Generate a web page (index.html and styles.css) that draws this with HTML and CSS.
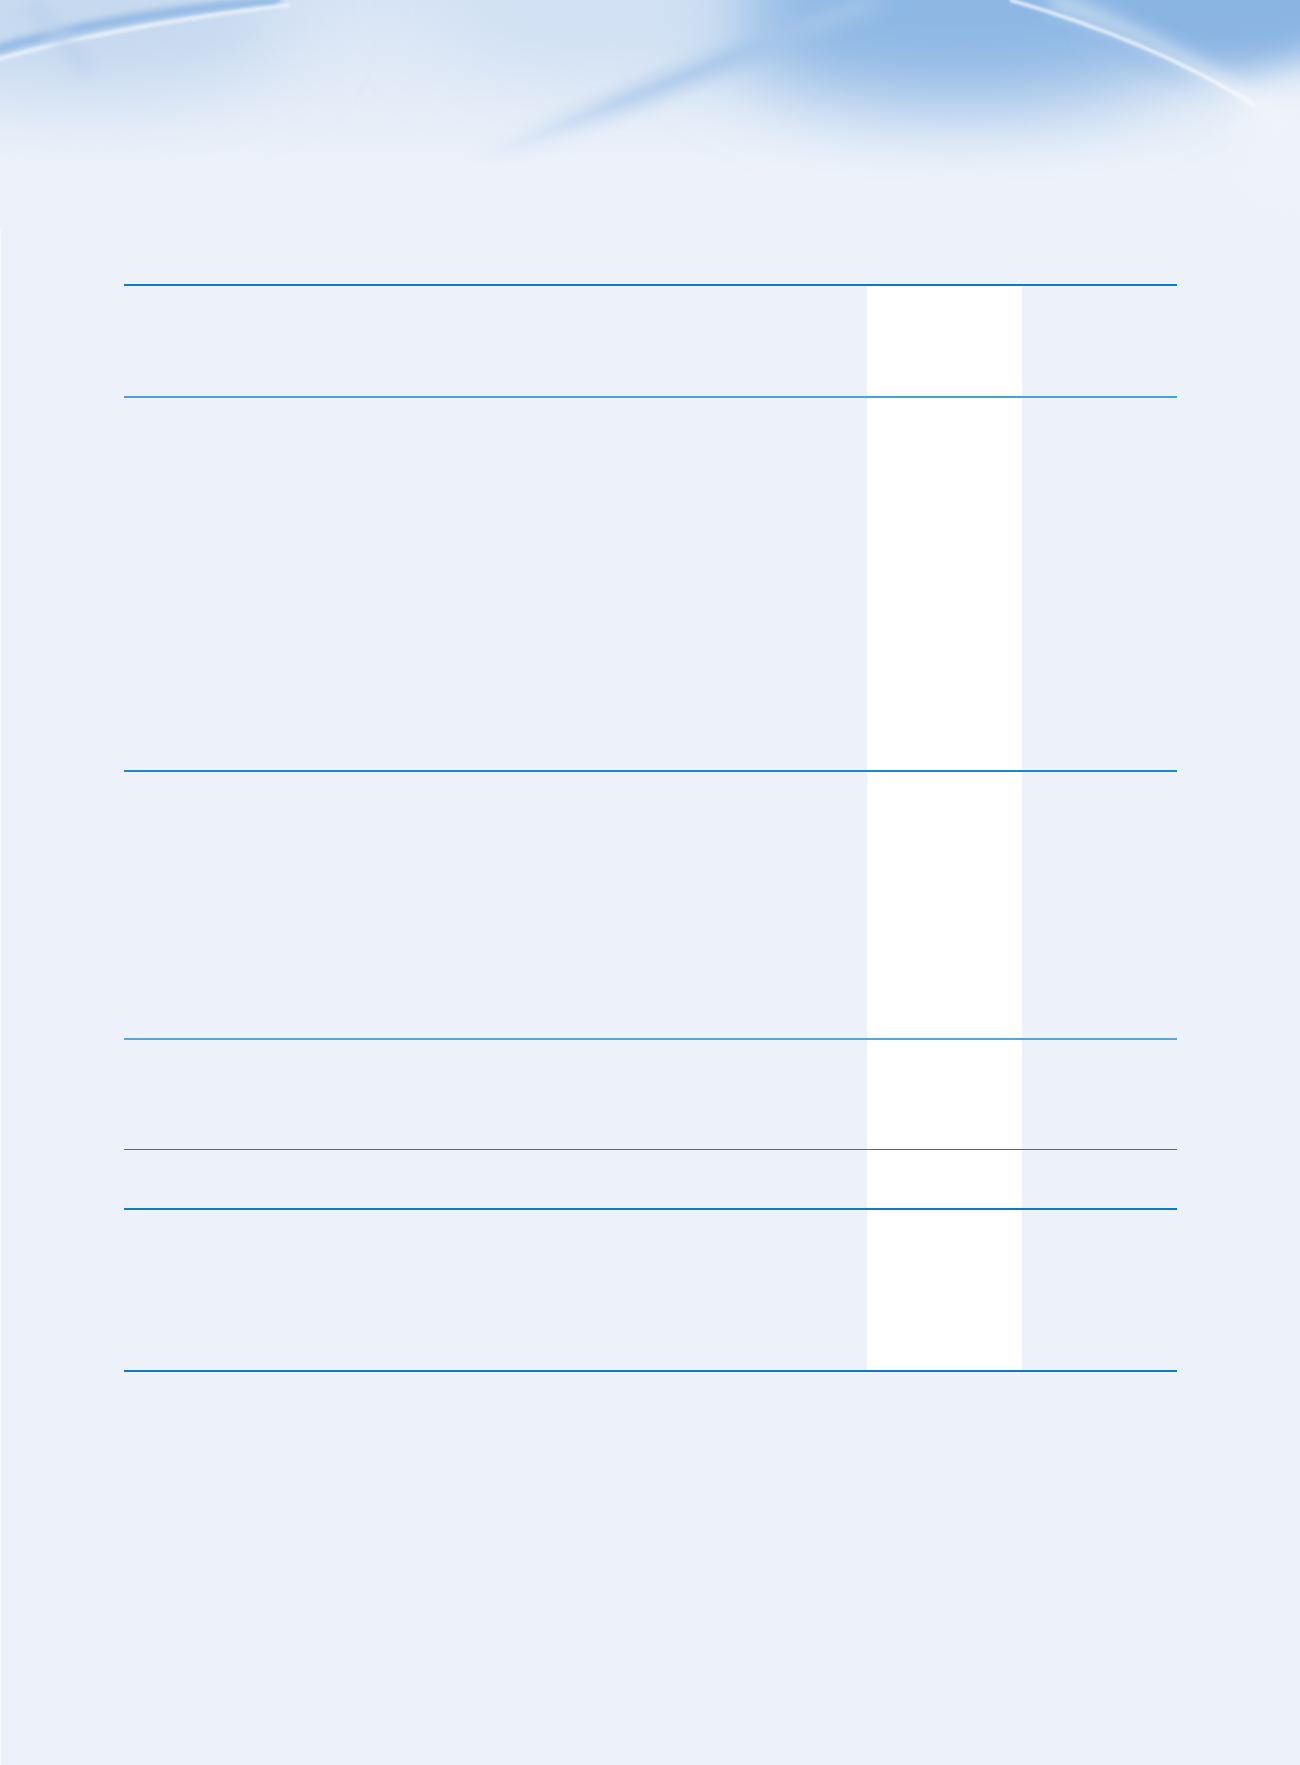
FILE: index.html
```html
<!DOCTYPE html>
<html lang="en">
<head>
<meta charset="utf-8">
<title>Table</title>
<link rel="stylesheet" href="styles.css">
</head>
<body>
<header class="banner">
  <svg class="banner-art" width="1300" height="230" viewBox="0 0 1300 230" xmlns="http://www.w3.org/2000/svg" aria-hidden="true">
    <defs>
      <linearGradient id="bg" x1="0" y1="0" x2="0" y2="1">
        <stop offset="0" stop-color="#d7e4f4"/>
        <stop offset="0.75" stop-color="#edf2fa"/>
        <stop offset="1" stop-color="#edf2fa"/>
      </linearGradient>
      <linearGradient id="streak" gradientUnits="userSpaceOnUse" x1="880" y1="0" x2="460" y2="165">
        <stop offset="0" stop-color="#9cc0e8" stop-opacity="1"/>
        <stop offset="0.6" stop-color="#b2cdec" stop-opacity="0.8"/>
        <stop offset="1" stop-color="#d8e5f5" stop-opacity="0"/>
      </linearGradient>
      <filter id="b40" x="-50%" y="-50%" width="200%" height="200%"><feGaussianBlur stdDeviation="40"/></filter>
      <filter id="b20" x="-50%" y="-50%" width="200%" height="200%"><feGaussianBlur stdDeviation="18"/></filter>
      <filter id="b8" x="-50%" y="-50%" width="200%" height="200%"><feGaussianBlur stdDeviation="8"/></filter>
      <filter id="b4" x="-50%" y="-50%" width="200%" height="200%"><feGaussianBlur stdDeviation="3.5"/></filter>
      <filter id="b2" x="-50%" y="-50%" width="200%" height="200%"><feGaussianBlur stdDeviation="1.5"/></filter>
    </defs>
    <rect width="1300" height="230" fill="url(#bg)"/>
    <ellipse cx="960" cy="10" rx="260" ry="95" fill="#8db7e4" filter="url(#b40)"/>
    <ellipse cx="1230" cy="0" rx="130" ry="70" fill="#8ab4e2" filter="url(#b20)"/>
    <ellipse cx="1290" cy="150" rx="60" ry="60" fill="#eef3fa" filter="url(#b20)"/>
    <ellipse cx="90" cy="20" rx="200" ry="70" fill="#c5d8ef" filter="url(#b40)"/>
    <ellipse cx="600" cy="10" rx="160" ry="60" fill="#d0e0f3" filter="url(#b40)"/>
    <path d="M 880 0 L 460 165" stroke="url(#streak)" stroke-width="22" fill="none" filter="url(#b8)"/>
    <path d="M 860 5 L 500 150" stroke="url(#streak)" stroke-width="5" fill="none" filter="url(#b4)"/>
    <path d="M 1010 0 Q 1150 40 1255 105" stroke="#ffffff" stroke-width="3" fill="none" opacity="0.9" filter="url(#b2)"/>
    <path d="M 1050 0 Q 1170 40 1280 120" stroke="#f3f7fc" stroke-width="14" fill="none" opacity="0.55" filter="url(#b8)"/>
    <path d="M -5 50 Q 110 15 280 0" stroke="#8db6e3" stroke-width="9" fill="none" filter="url(#b4)"/>
    <path d="M -5 60 Q 120 25 290 5" stroke="#f2f6fc" stroke-width="4" fill="none" opacity="0.8" filter="url(#b2)"/>
    <path d="M 30 0 Q 60 40 90 70" stroke="#b9d0ec" stroke-width="20" fill="none" opacity="0.6" filter="url(#b8)"/>
  </svg>
</header>
<main class="page">
  <div class="sheet">
    <div class="row row-1">
      <div class="cell c-a"></div><div class="cell c-b"></div><div class="cell c-hl"></div><div class="cell c-d"></div>
    </div>
    <div class="row row-2">
      <div class="cell c-a"></div><div class="cell c-b"></div><div class="cell c-hl"></div><div class="cell c-d"></div>
    </div>
    <div class="row row-3">
      <div class="cell c-a"></div><div class="cell c-b"></div><div class="cell c-hl"></div><div class="cell c-d"></div>
    </div>
    <div class="row row-4">
      <div class="cell c-a"></div><div class="cell c-b"></div><div class="cell c-hl"></div><div class="cell c-d"></div>
    </div>
    <div class="row row-5">
      <div class="cell c-a"></div><div class="cell c-b"></div><div class="cell c-hl"></div><div class="cell c-d"></div>
    </div>
    <div class="row row-6">
      <div class="cell c-a"></div><div class="cell c-b"></div><div class="cell c-hl"></div><div class="cell c-d"></div>
    </div>
  </div>
</main>
</body>
</html>
```
FILE: styles.css
```css
html, body {
  margin: 0;
  padding: 0;
}
body {
  background: #edf2fa;
  font-family: "Liberation Sans", Arial, sans-serif;
  width: 1300px;
  min-height: 1765px;
  overflow: hidden;
}
.banner {
  height: 230px;
}
.banner-art {
  display: block;
}
.page {
  border-left: 1px solid #f7f9fd;
  padding: 54px 0 0 123px;
  min-height: 1535px;
  box-sizing: border-box;
}
.sheet {
  width: 1053px;
  display: flex;
  flex-direction: column;
  border-bottom: 2px solid #0a7cc8;
}
.row {
  display: grid;
  grid-template-columns: 650px 93px 155px 155px;
  box-sizing: border-box;
}
.cell {
  height: 100%;
}
.c-hl {
  background: #ffffff;
}
.row-1 {
  height: 112px;
  border-top: 2px solid #0a7cc8;
}
.row-2 {
  height: 374px;
  border-top: 2px solid #45a3e2;
}
.row-3 {
  height: 268px;
  border-top: 2px solid #1a89d5;
}
.row-4 {
  height: 111px;
  border-top: 2px solid #56a6da;
}
.row-5 {
  height: 59px;
  border-top: 1px solid #0a80c8;
}
.row-6 {
  height: 162px;
  border-top: 2px solid #0a7cc8;
}
```
